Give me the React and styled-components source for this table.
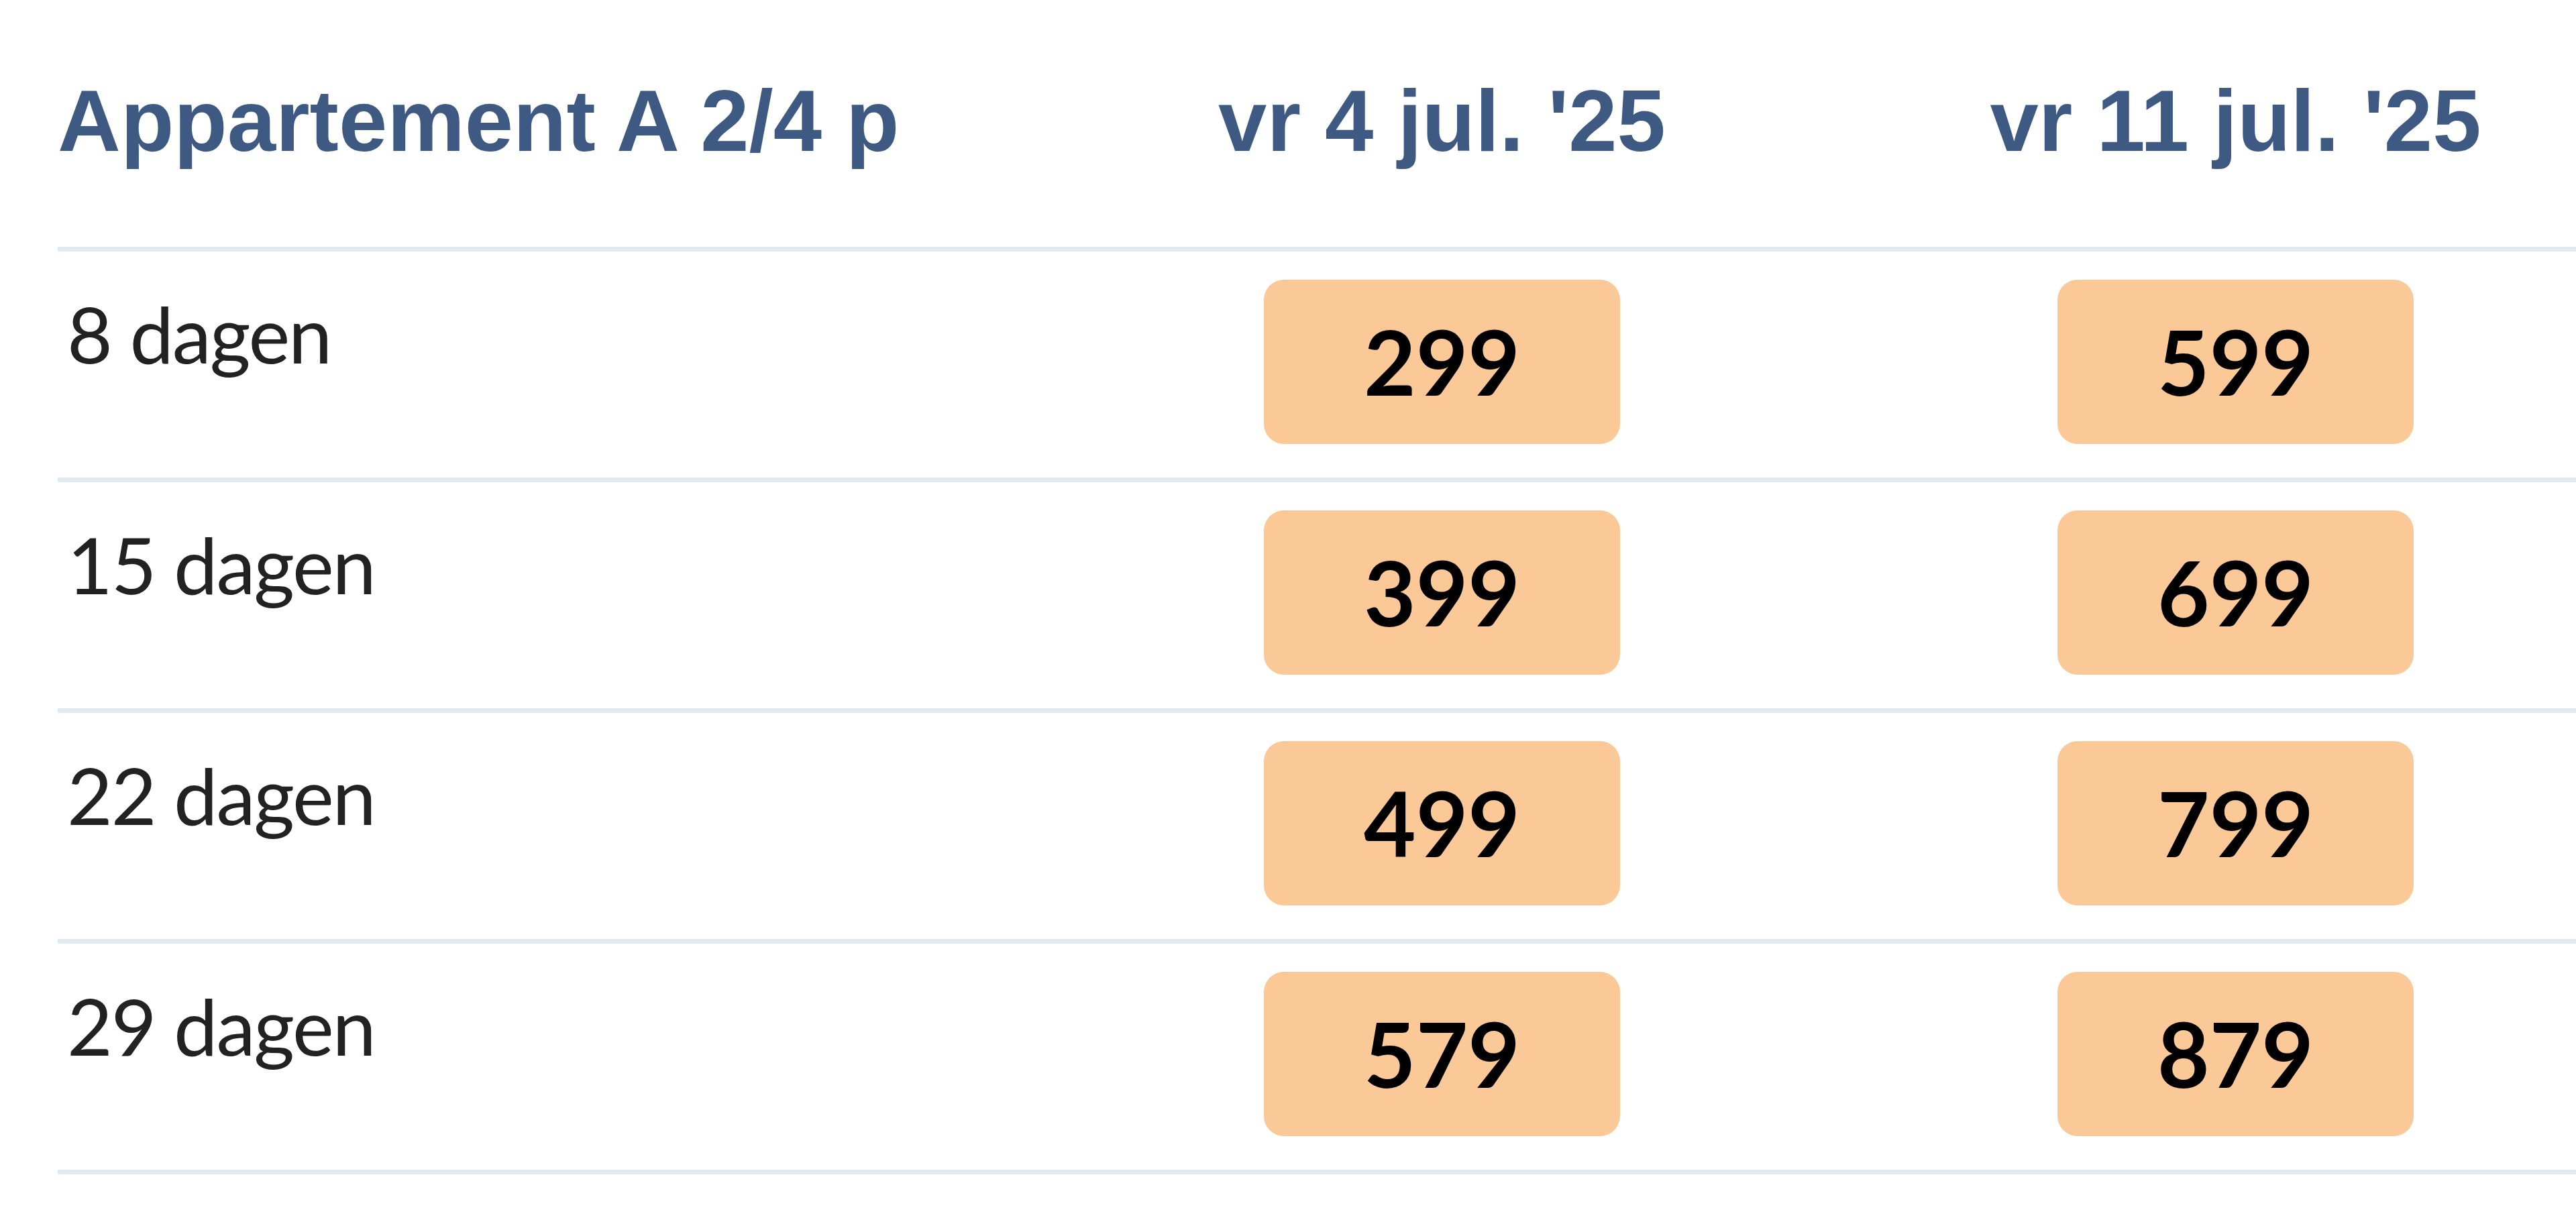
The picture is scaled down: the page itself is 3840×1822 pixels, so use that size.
import React from "react";
import styled, { createGlobalStyle } from "styled-components";

const Global = createGlobalStyle`
  html, body {
    margin: 0;
    padding: 0;
    background: #ffffff;
    overflow: hidden;
  }
  body {
    font-family: Lato, "Liberation Sans", sans-serif;
  }
`;

const Page = styled.div`
  padding-left: 86px;
  width: 3840px;
  box-sizing: border-box;
  overflow: hidden;
`;

const Table = styled.div`
  width: 3838px;
  display: flex;
  flex-direction: column;
`;

const Row = styled.div`
  display: grid;
  grid-template-columns: 1472px 1183px 1183px;
  height: ${(p) => (p.$head ? 368 : 337)}px;
  border-bottom: 7px solid #e1e9f1;
`;

const HeadCell = styled.div`
  font-family: "Liberation Sans", Arial, sans-serif;
  font-weight: 700;
  font-size: 130px;
  line-height: 150px;
  color: #3e5a82;
  padding-top: 105px;
  white-space: nowrap;
  text-align: ${(p) => (p.$center ? "center" : "left")};
`;

const Label = styled.div`
  font-family: Lato, "Liberation Sans", sans-serif;
  font-weight: 400;
  font-size: 117px;
  line-height: 1.2;
  letter-spacing: -2.2px;
  color: #222222;
  padding-top: 52px;
  padding-left: 14px;
  white-space: nowrap;
`;

const PriceCell = styled.div`
  display: flex;
  justify-content: center;
  align-items: flex-start;
  padding-top: 42px;
`;

const Badge = styled.div`
  width: 531px;
  height: 245px;
  border-radius: 30px;
  background: #fbc997;
  display: flex;
  align-items: center;
  justify-content: center;
  font-family: Lato, "Liberation Sans", sans-serif;
  font-weight: 700;
  font-size: 134px;
  line-height: 1.2;
  color: #000000;
`;

const rows = [
  { label: "8 dagen", prices: ["299", "599"] },
  { label: "15 dagen", prices: ["399", "699"] },
  { label: "22 dagen", prices: ["499", "799"] },
  { label: "29 dagen", prices: ["579", "879"] },
];

export default function App() {
  return (
    <Page>
      <Global />
      <Table>
        <Row $head>
          <HeadCell>Appartement A 2/4 p</HeadCell>
          <HeadCell $center>vr 4 jul. '25</HeadCell>
          <HeadCell $center>vr 11 jul. '25</HeadCell>
        </Row>
        {rows.map((r) => (
          <Row key={r.label}>
            <Label>{r.label}</Label>
            {r.prices.map((p) => (
              <PriceCell key={p}>
                <Badge>{p}</Badge>
              </PriceCell>
            ))}
          </Row>
        ))}
      </Table>
    </Page>
  );
}
